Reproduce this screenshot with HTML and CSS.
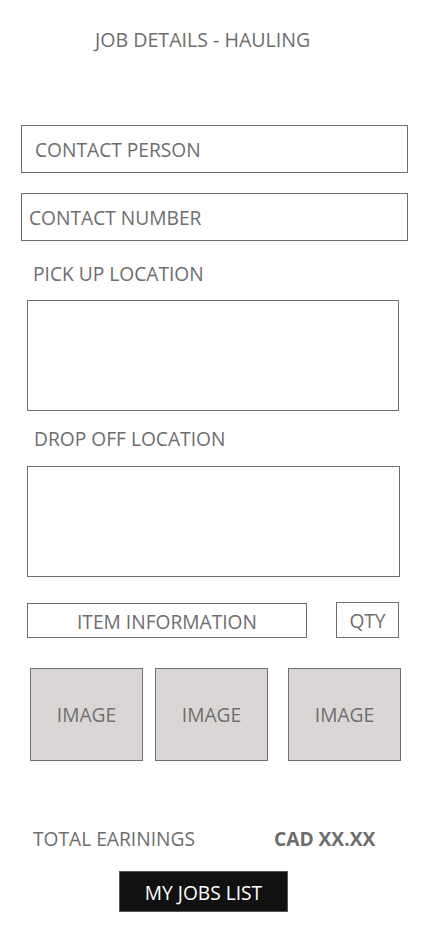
FILE: index.html
```html
<!DOCTYPE html>
<html>
<head>
<meta charset="utf-8">
<link rel="stylesheet" href="styles.css">
</head>
<body>
<div class="page">
  <h1 class="title">JOB DETAILS - HAULING</h1>
  <div class="field field-person">CONTACT PERSON</div>
  <div class="field field-number">CONTACT NUMBER</div>
  <div class="label label-pick">PICK UP LOCATION</div>
  <div class="area area-pick"></div>
  <div class="label label-drop">DROP OFF LOCATION</div>
  <div class="area area-drop"></div>
  <div class="item-row">
    <div class="item">ITEM INFORMATION</div>
    <div class="qty">QTY</div>
  </div>
  <div class="images">
    <div class="img img-1">IMAGE</div>
    <div class="img img-2">IMAGE</div>
    <div class="img img-3">IMAGE</div>
  </div>
  <div class="total">
    <span class="total-label">TOTAL EARININGS</span>
    <span class="total-value">CAD XX.XX</span>
  </div>
  <button class="jobs-btn">MY JOBS LIST</button>
</div>
</body>
</html>
```
FILE: styles.css
```css
* { box-sizing: border-box; }
html, body { margin: 0; padding: 0; background: #fff; }
body {
  font-family: "Open Sans", "Noto Sans", sans-serif;
  color: #6e6e6e;
  width: 428px;
  height: 926px;
  overflow: hidden;
}
.page { display: flex; flex-direction: column; align-items: flex-start; }
.title {
  margin: 28px 0 0 95px;
  font-size: 19.6px;
  font-weight: 400;
  line-height: 24px;
  color: #6e6e6e;
}
.field {
  border: 1px solid #707070;
  width: 387px;
  height: 48px;
  margin-left: 21px;
  display: flex;
  align-items: center;
  font-size: 19.2px;
  padding-top: 1px;
}
.field-person { margin-top: 73px; padding-left: 13px; }
.field-number { margin-top: 20px; padding-left: 7px; }
.label { font-size: 19.2px; line-height: 24px; }
.label-pick { margin: 21px 0 0 33px; }
.label-drop { margin: 16px 0 0 34px; }
.area {
  border: 1px solid #707070;
  height: 111px;
  margin-left: 27px;
}
.area-pick { width: 372px; margin-top: 14px; }
.area-drop { width: 373px; margin-top: 15px; }
.item-row {
  display: flex;
  align-items: flex-start;
  gap: 29px;
  margin: 25px 0 0 27px;
}
.item, .qty {
  border: 1px solid #707070;
  display: flex;
  align-items: center;
  justify-content: center;
  font-size: 19.2px;
  padding-top: 1px;
}
.item { width: 280px; height: 35px; margin-top: 1px; }
.qty { width: 63px; height: 36px; }
.images {
  display: flex;
  margin: 30px 0 0 30px;
}
.img {
  width: 113px;
  height: 93px;
  background: #dbd6d6;
  border: 1px solid #707070;
  display: flex;
  align-items: center;
  justify-content: center;
  font-size: 19.2px;
}
.img-2 { margin-left: 12px; }
.img-3 { margin-left: 20px; }
.total {
  display: flex;
  margin: 66px 0 0 33px;
  font-size: 19.2px;
  line-height: 24px;
}
.total-value { margin-left: 79px; font-weight: 700; }
.jobs-btn {
  margin: 20px 0 0 119px;
  width: 169px;
  height: 41px;
  background: #111;
  border: 1px solid #555;
  color: #fff;
  font-family: inherit;
  font-size: 19.2px;
  padding: 2px 0 0;
}
```
